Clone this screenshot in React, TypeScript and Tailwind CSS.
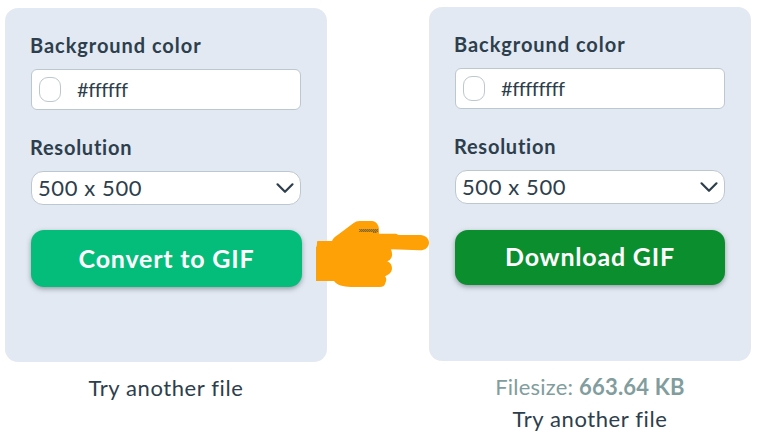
import React from 'react';

type Option = {
  color: string;
  action: string;
  button: string;
};

function Chevron() {
  return (
    <svg className="h-[13px] w-[20px]" viewBox="0 0 20 13" fill="none" stroke="#2d3e4c" strokeWidth="2.2" strokeLinecap="round" strokeLinejoin="round">
      <path d="M2.5 2.3 10 9.8 17.5 2.3" />
    </svg>
  );
}

function Panel({ color, action, button }: Option) {
  return (
    <section className="h-[354px] w-[322px] rounded-[13px] bg-[#e2e9f2] px-[26px] pt-[25px]">
      <h2 className="-ml-px h-6 text-[20px] leading-6 font-bold tracking-[0.95px] whitespace-nowrap">Background color</h2>
      <div className="mt-3 flex h-[41px] w-[270px] items-center rounded-[6px] border border-[#bdc7d0] bg-white pl-[7px]">
        <span className="h-[25px] w-[22px] rounded-[9px] border border-[#bdc7d0]" />
        <span className="ml-[16px] pb-px text-[20px] leading-6 tracking-[-0.45px]">{color}</span>
      </div>
      <h2 className="mt-[25px] -ml-px h-6 text-[20px] leading-6 font-bold tracking-[0.75px]">Resolution</h2>
      <div className="mt-3 flex h-[34px] w-[270px] items-center justify-between rounded-[12px] border border-[#bdc7d0] bg-white pr-[5px] pl-[6px]">
        <span className="text-[22px] leading-6 tracking-[0.6px]">500 x 500</span>
        <Chevron />
      </div>
      <button className={`flex items-center justify-center rounded-[13px] text-[25px] leading-7 font-bold whitespace-nowrap text-white shadow-[0_2px_5px_rgba(70,80,90,0.5)] ${button}`}>
        {action}
      </button>
    </section>
  );
}

function PointingHand() {
  return (
    <svg className="absolute top-[210px] left-[305px] h-[90px] w-[135px]" viewBox="0 0 405 270">
      <path
        fill="#fda106"
        d="M39 93H81C84 85 92 79 101 73L145 40Q153 33 164 33H201C213 34 221 44 222 57V71H273L281 75H346C361 76 372 85 372 98S360 121 345 121L258 118Q264 135 259 143Q256 150 247 154C256 158 261 166 261 175C261 186 253 194 240 199Q247 207 241 219Q239 231 224 231H137C114 230 97 226 87 213H33V112Q36 110 36 96Q36 93 39 93Z"
      />
      <path d="M163 58.5H219M166 61.5H219M163 64.5H219M205 67.5H217" fill="none" stroke="#4d4c45" strokeWidth="3" strokeDasharray="3 3" />
    </svg>
  );
}

export default function App() {
  return (
    <main className="relative flex h-[436px] w-[757px] gap-[102px] overflow-hidden bg-white pl-[5px] font-['Lato',sans-serif] text-[#2d3e4c]">
      <div className="flex w-[322px] flex-col items-center pt-[8px]">
        <Panel color="#ffffff" action="Convert to GIF" button="mt-[25px] h-[57px] w-[271px] bg-[#05bd7b] pb-[2px] tracking-[0.8px]" />
        <a className="mt-[12px] text-[22px] leading-7 tracking-[0.6px]">Try another file</a>
      </div>
      <div className="flex w-[322px] flex-col items-center pt-[7px]">
        <Panel color="#ffffffff" action="Download GIF" button="mt-[26px] h-[55px] w-[270px] bg-[#0a8e2e] pb-[3px] tracking-[0.8px]" />
        <p className="mt-[12px] text-[22px] leading-7 tracking-[0.2px] whitespace-nowrap text-[#819d9e]">
          Filesize: <strong className="font-bold">663.64 KB</strong>
        </p>
        <a className="mt-1 text-[22px] leading-7 tracking-[0.6px]">Try another file</a>
      </div>
      <PointingHand />
    </main>
  );
}
